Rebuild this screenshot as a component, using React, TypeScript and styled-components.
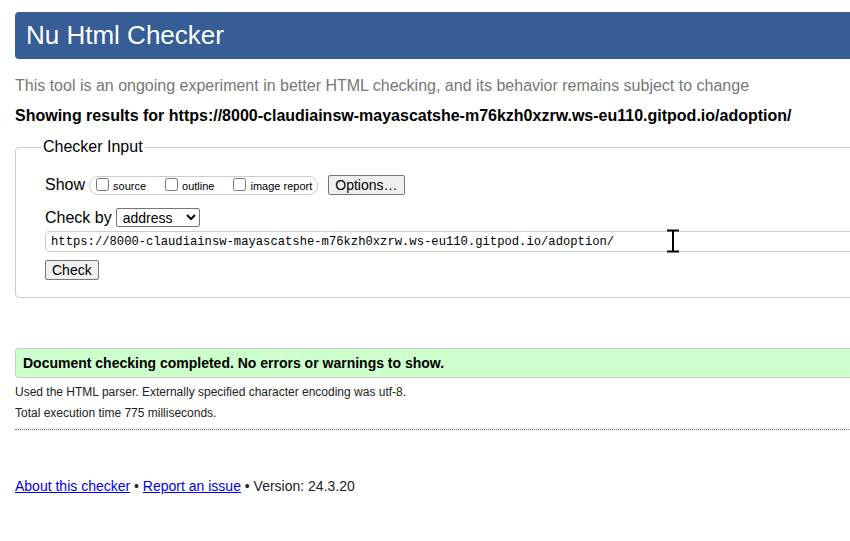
import styled, { createGlobalStyle } from "styled-components"

const Global = createGlobalStyle`
    html, body {
        margin: 0;
        padding: 0;
        overflow: hidden;
        background: #fff;
    }
    body {
        font-family: "Liberation Sans", Arial, sans-serif;
        color: #000;
    }
`

const Page = styled.div`
    position: relative;
    width: 1200px;
    padding: 12px 0 40px 15px;
`

const Header = styled.h1`
    margin: 0;
    height: 47px;
    line-height: 47px;
    padding-left: 11px;
    background: #365d95;
    color: #fff;
    font-size: 26px;
    font-weight: normal;
    border-radius: 4px 0 0 4px;
`

const Intro = styled.p`
    margin: 18px 0 0;
    font-size: 16px;
    line-height: 18px;
    color: #777;
`

const Target = styled.p`
    margin: 12px 0 0;
    font-size: 16px;
    line-height: 18px;
    font-weight: bold;
`

const Fieldset = styled.fieldset`
    margin: 13px 0 0;
    padding: 0 0 17px 29px;
    border: 1px solid #ccc;
    border-radius: 4px 0 0 4px;
`

const Legend = styled.legend`
    font-size: 16px;
    line-height: 18px;
    padding: 0 2px;
    margin-left: -4px;
`

const Row = styled.div<{ $top: number }>`
    display: flex;
    align-items: center;
    margin-top: ${p => p.$top}px;
    font-size: 16px;
`

const Options = styled.div`
    display: flex;
    align-items: center;
    height: 17px;
    margin-left: 4px;
    padding: 0 5px 0 6px;
    border: 1px solid #ccc;
    border-radius: 9px;
    gap: 19px;
`

const Option = styled.label`
    display: flex;
    align-items: center;
    font-size: 11px;
    padding-top: 1px;
    input {
        margin: -2px 4px 0 0;
        width: 13px;
        height: 13px;
    }
`

const Button = styled.button<{ $left?: number }>`
    margin-left: ${p => p.$left ?? 0}px;
    height: 20px;
    padding: 0 6px;
    font-family: "Liberation Sans", Arial, sans-serif;
    font-size: 14px;
    color: #000;
    background: #efefef;
    border: 1px solid #767676;
    border-radius: 2px;
`

const Select = styled.select`
    margin-left: 4px;
    width: 84px;
    height: 19px;
    font-family: "Liberation Sans", Arial, sans-serif;
    font-size: 14px;
    border: 1px solid #767676;
    border-radius: 2px;
    background: #fff;
    padding: 0 0 0 2px;
`

const UrlInput = styled.input`
    display: block;
    margin-top: 4px;
    width: 1150px;
    height: 21px;
    box-sizing: border-box;
    padding: 0 5px;
    font-family: "Liberation Mono", "DejaVu Sans Mono", monospace;
    font-size: 12.2px;
    color: #000;
    border: 1px solid #ccc;
    border-radius: 4px 0 0 4px;
    outline: none;
`

const Success = styled.div`
    margin-top: 50px;
    height: 28px;
    line-height: 28px;
    padding-left: 7px;
    background: #ccffcc;
    border: 1px solid #ccc;
    border-right: none;
    border-radius: 4px 0 0 4px;
    font-size: 14px;
    font-weight: bold;
`

const Detail = styled.p<{ $top: number }>`
    margin: ${p => p.$top}px 0 0;
    font-size: 12px;
    line-height: 14px;
    color: #222;
`

const Rule = styled.hr`
    margin: 9px 0 0;
    border: none;
    border-top: 1px dotted #666;
`

const Footer = styled.p`
    margin: 48px 0 0;
    font-size: 14px;
    line-height: 16px;
    color: #222;
    a {
        color: #0000ee;
        text-decoration: underline;
    }
`

const Cursor = styled.svg`
    position: absolute;
    left: 665px;
    top: 229px;
`

const url = "https://8000-claudiainsw-mayascatshe-m76kzh0xzrw.ws-eu110.gitpod.io/adoption/"

export default function App() {
    return (
        <Page>
            <Global />
            <Header>Nu Html Checker</Header>
            <Intro>This tool is an ongoing experiment in better HTML checking, and its behavior remains subject to change</Intro>
            <Target>Showing results for {url}</Target>
            <Fieldset>
                <Legend>Checker Input</Legend>
                <Row $top={19}>
                    <span>Show</span>
                    <Options>
                        <Option><input type="checkbox" />source</Option>
                        <Option><input type="checkbox" />outline</Option>
                        <Option><input type="checkbox" />image report</Option>
                    </Options>
                    <Button $left={10}>Options…</Button>
                </Row>
                <Row $top={13}>
                    <span>Check by</span>
                    <Select defaultValue="address">
                        <option value="address">address</option>
                        <option value="file">file upload</option>
                        <option value="text">text input</option>
                    </Select>
                </Row>
                <UrlInput defaultValue={url} readOnly />
                <Row $top={8}>
                    <Button>Check</Button>
                </Row>
            </Fieldset>
            <Success>Document checking completed. No errors or warnings to show.</Success>
            <Detail $top={7}>Used the HTML parser. Externally specified character encoding was utf-8.</Detail>
            <Detail $top={7}>Total execution time 775 milliseconds.</Detail>
            <Rule />
            <Footer>
                <a href="#">About this checker</a> • <a href="#">Report an issue</a> • Version: 24.3.20
            </Footer>
            <Cursor width="16" height="24" viewBox="0 0 16 24">
                <path d="M2 1.5h4.5M9.5 1.5H14M8 2v20M2 22.5h4.5M9.5 22.5H14M6 1.5h4M6 22.5h4" stroke="#000" strokeWidth="2" fill="none" />
            </Cursor>
        </Page>
    )
}
